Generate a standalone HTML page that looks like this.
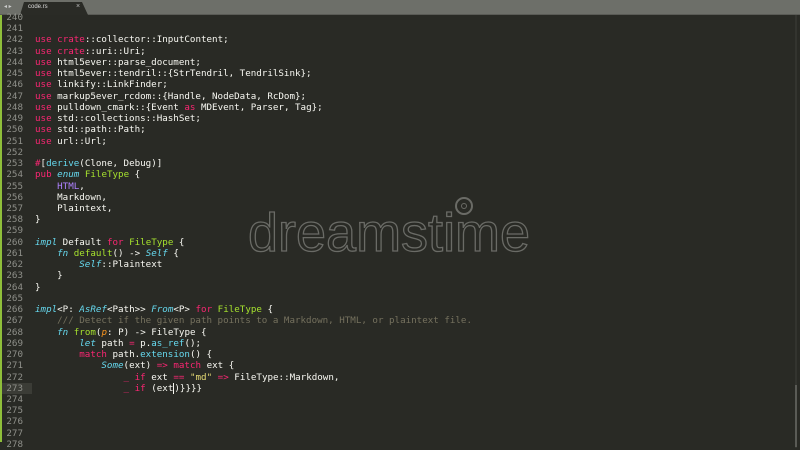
<!DOCTYPE html>
<html><head><meta charset="utf-8"><style>
html,body{margin:0;padding:0;}
body{width:800px;height:450px;overflow:hidden;background:#292a25;position:relative;font-family:"DejaVu Sans Mono","Liberation Mono",monospace;}
.bar{position:absolute;left:0;top:0;width:800px;height:14px;background:#6d6f69;border-bottom:1px solid #5a5b56;}
.tab{position:absolute;left:20px;top:2px;width:68px;height:13px;background:#2a2b26;clip-path:polygon(4px 0,62px 0,68px 13px,0 13px);}
.tab span{position:absolute;left:8px;top:2px;font:6px "Liberation Sans",sans-serif;color:#ddd;}
.tab b{position:absolute;left:56px;top:1px;font:7px "Liberation Sans",sans-serif;color:#bbb;}
.arrows{position:absolute;left:4px;top:3px;font:6px "Liberation Sans",sans-serif;color:#ccc;}
.green{position:absolute;left:0;top:15px;width:2px;height:427px;background:#8fbf3a;}
.code{position:absolute;left:0;top:12px;font-size:9.2px;line-height:11.24px;color:#f8f8f2;white-space:pre;}
.ln{display:inline-block;width:23px;text-align:right;color:#8f908a;margin-right:12px;}
.k{color:#f92672}.g{color:#a6e22e}.c{color:#66d9ef}.i{color:#66d9ef;font-style:italic}.p{color:#ae81ff}.cm{color:#75715e}.o{color:#fd971f;font-style:italic}.s{color:#e6db74}
.hl{position:absolute;left:2px;top:383px;width:30px;height:11px;background:#3b3c36;}
.wm{position:absolute;left:248px;top:206px;font:54px/54px "Liberation Sans",sans-serif;color:transparent;-webkit-text-stroke:1.3px #6a6b66;}
.sw{position:absolute;left:455px;top:197px;width:14px;height:14px;border:2px solid #6a6b66;border-radius:50%;}
.sw:after{content:"";position:absolute;left:4px;top:4px;width:4px;height:4px;border:1.5px solid #6a6b66;border-radius:50%;}
.sb{position:absolute;left:795px;top:15px;width:2px;height:433px;background:#33342f;}
.sb2{position:absolute;left:795px;top:385px;width:2px;height:62px;background:#5a5b56;}
</style></head><body>
<div class="bar"><div class="arrows">◂ ▸</div><div class="tab"><span>code.rs</span><b>×</b></div></div>
<div class="hl"></div>
<div class="green"></div>
<div class="wm">dreamstime</div><div class="sw"></div>
<div class="sb"></div><div class="sb2"></div>
<div class="code"><span class="ln">240</span>
<span class="ln">241</span>
<span class="ln">242</span><span class="k">use</span> <span class="k">crate</span>::collector::InputContent;
<span class="ln">243</span><span class="k">use</span> <span class="k">crate</span>::uri::Uri;
<span class="ln">244</span><span class="k">use</span> html5ever::parse_document;
<span class="ln">245</span><span class="k">use</span> html5ever::tendril::{StrTendril, TendrilSink};
<span class="ln">246</span><span class="k">use</span> linkify::LinkFinder;
<span class="ln">247</span><span class="k">use</span> markup5ever_rcdom::{Handle, NodeData, RcDom};
<span class="ln">248</span><span class="k">use</span> pulldown_cmark::{Event <span class="k">as</span> MDEvent, Parser, Tag};
<span class="ln">249</span><span class="k">use</span> std::collections::HashSet;
<span class="ln">250</span><span class="k">use</span> std::path::Path;
<span class="ln">251</span><span class="k">use</span> url::Url;
<span class="ln">252</span>
<span class="ln">253</span><span class="k">#</span>[<span class="c">derive</span>(Clone, Debug)]
<span class="ln">254</span><span class="k">pub</span> <span class="i">enum</span> <span class="g">FileType</span> {
<span class="ln">255</span>    <span class="p">HTML</span>,
<span class="ln">256</span>    Markdown,
<span class="ln">257</span>    Plaintext,
<span class="ln">258</span>}
<span class="ln">259</span>
<span class="ln">260</span><span class="i">impl</span> Default <span class="k">for</span> <span class="g">FileType</span> {
<span class="ln">261</span>    <span class="i">fn</span> <span class="g">default</span>() -&gt; <span class="i">Self</span> {
<span class="ln">262</span>        <span class="i">Self</span>::Plaintext
<span class="ln">263</span>    }
<span class="ln">264</span>}
<span class="ln">265</span>
<span class="ln">266</span><span class="i">impl</span>&lt;P: <span class="i">AsRef</span>&lt;Path&gt;&gt; <span class="i">From</span>&lt;P&gt; <span class="k">for</span> <span class="g">FileType</span> {
<span class="ln">267</span>    <span class="cm">/// Detect if the given path points to a Markdown, HTML, or plaintext file.</span>
<span class="ln">268</span>    <span class="i">fn</span> <span class="g">from</span>(<span class="o">p</span>: P) -&gt; FileType {
<span class="ln">269</span>        <span class="i">let</span> path <span class="k">=</span> p.<span class="c">as_ref</span>();
<span class="ln">270</span>        <span class="k">match</span> path.<span class="c">extension</span>() {
<span class="ln">271</span>            <span class="i">Some</span>(ext) <span class="k">=&gt;</span> <span class="k">match</span> ext {
<span class="ln">272</span>                <span class="k">_</span> <span class="k">if</span> ext <span class="k">==</span> <span class="s">"md"</span> <span class="k">=&gt;</span> FileType::Markdown,
<span class="ln">273</span>                <span class="k">_</span> <span class="k">if</span> (ext<span style="border-left:1px solid #f8f8f2">)</span>}}}}
<span class="ln">274</span>
<span class="ln">275</span>
<span class="ln">276</span>
<span class="ln">277</span>
<span class="ln">278</span>
</div>
</body></html>
